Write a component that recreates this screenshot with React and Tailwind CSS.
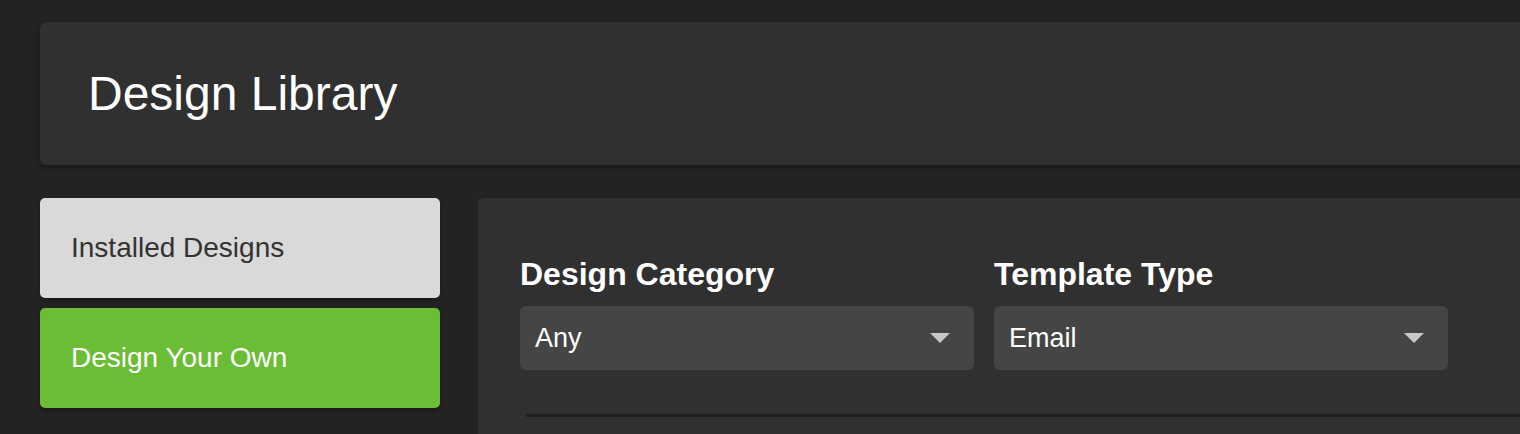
import { useState } from "react";

const tabs = ["Installed Designs", "Design Your Own"];

function SelectBox({ value }) {
  return (
    <div className="flex items-center justify-between h-[64px] bg-[#454545] rounded-md pl-[15px] pr-[24px]">
      <span className="text-[27px] text-white">{value}</span>
      <svg width="20" height="10" viewBox="0 0 20 10">
        <path d="M0 0 L20 0 L10 10 Z" fill="#c8c8c8" />
      </svg>
    </div>
  );
}

export default function App() {
  const [active, setActive] = useState(1);

  return (
    <div
      className="h-[434px] w-[1520px] overflow-hidden bg-[#232323] pl-[40px] pt-[22px]"
      style={{ fontFamily: '"Liberation Sans", Arial, sans-serif' }}
    >
      {/* Header */}
      <div className="w-[1520px] h-[143px] bg-[#303030] rounded-md shadow-[0_2px_6px_rgba(0,0,0,0.35)] flex items-center pl-[48px]">
        <h1 className="text-[48px] text-white">Design Library</h1>
      </div>

      <div className="flex mt-[33px]">
        {/* Tabs */}
        <div className="w-[400px] shrink-0 flex flex-col gap-[10px]">
          {tabs.map((t, i) => (
            <button
              key={t}
              onClick={() => setActive(i)}
              className={
                "h-[100px] rounded-[5px] text-left pl-[31px] text-[28px] shadow-[0_2px_4px_rgba(0,0,0,0.35)] " +
                (active === i ? "bg-[#6abd34] text-white" : "bg-[#d9d9d9] text-[#333333]")
              }
            >
              {t}
            </button>
          ))}
        </div>

        {/* Filters panel */}
        <div className="ml-[38px] w-[1100px] shrink-0 h-[300px] bg-[#303030] rounded-tl-md pt-[58px] pl-[42px]">
          <div className="flex gap-[20px]">
            <div className="w-[454px]">
              <div className="text-[32px] leading-[36px] font-bold text-white mb-[14px]">Design Category</div>
              <SelectBox value="Any" />
            </div>
            <div className="w-[454px]">
              <div className="text-[32px] leading-[36px] font-bold text-white mb-[14px]">Template Type</div>
              <SelectBox value="Email" />
            </div>
          </div>
          <div className="ml-[6px] mt-[44px] h-[3px] bg-[#1f1f1f]" />
        </div>
      </div>
    </div>
  );
}
